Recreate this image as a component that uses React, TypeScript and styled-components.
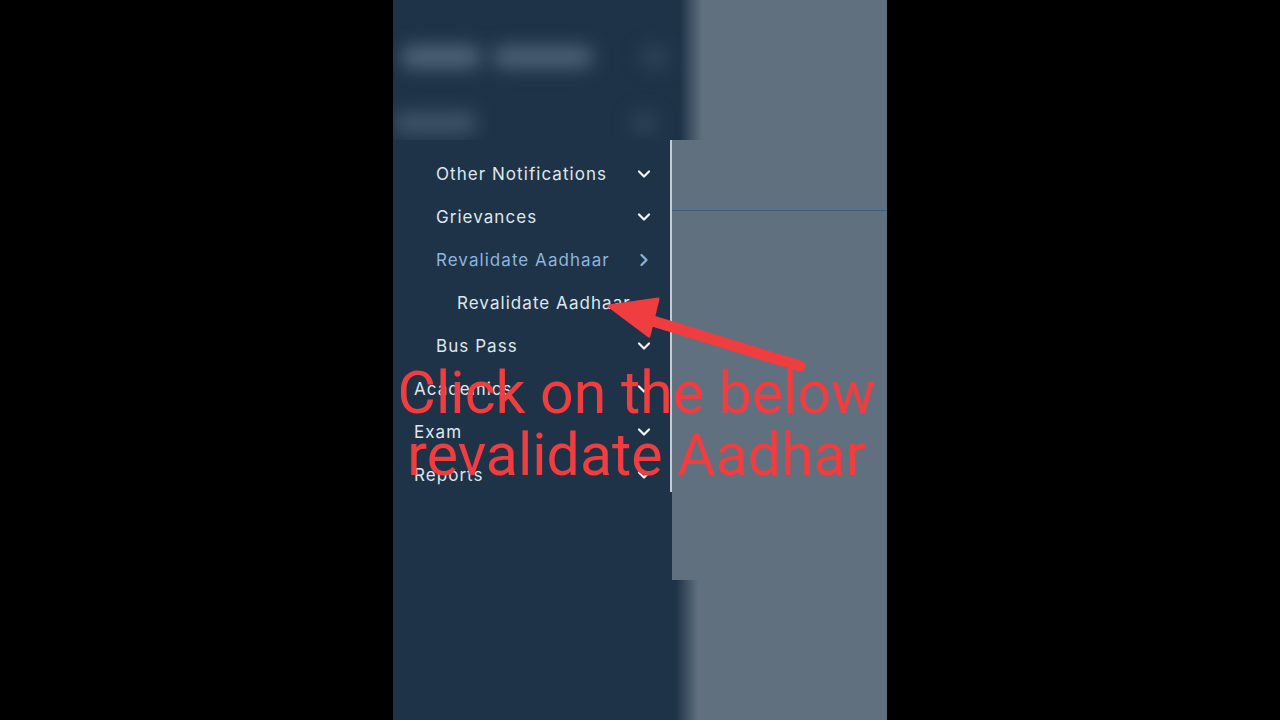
import * as React from 'react'
import styled, { createGlobalStyle } from 'styled-components'
import { ChevronDown, ChevronRight } from 'lucide-react'

const colors = {
  navy: '#1f3348',
  slate: '#60707e',
  text: '#dfe7ee',
  active: '#8db5dc',
  red: '#ef3d40',
  rule: '#3e5d7c',
  divider: '#c3ccd4',
}

const GlobalStyle = createGlobalStyle`
  html, body {
    margin: 0;
    background: #000;
  }
`

const Stage = styled.div`
  display: flex;
  justify-content: center;
  width: 1280px;
  height: 720px;
  background: #000;
`

const Phone = styled.div`
  position: relative;
  display: flex;
  flex-direction: column;
  width: 494px;
  height: 720px;
  overflow: hidden;
  background: ${colors.slate};
`

const BlurBand = styled.div<{ $edge: number }>`
  height: 140px;
  flex: none;
  overflow: hidden;
  background: linear-gradient(
    90deg,
    ${colors.navy} 0,
    ${colors.navy} ${(p) => p.$edge}px,
    ${colors.slate} ${(p) => p.$edge + 22}px
  );
`

const BlurHeader = styled.div`
  display: flex;
  flex-direction: column;
  gap: 40px;
  padding: 44px 0 0 0;
  width: 280px;
  filter: blur(9px);
`

const BlurRow = styled.div`
  display: flex;
  align-items: center;
  height: 26px;
`

const Blob = styled.div<{ $w: number; $shade: string; $ml?: number }>`
  width: ${(p) => p.$w}px;
  height: 22px;
  margin-left: ${(p) => p.$ml ?? 0}px;
  border-radius: 10px;
  background: ${(p) => p.$shade};
`

const Middle = styled.div`
  display: flex;
  height: 440px;
  flex: none;
`

const Sidebar = styled.nav`
  display: flex;
  flex-direction: column;
  width: 279px;
  background: ${colors.navy};
`

const MenuPane = styled.ul`
  list-style: none;
  margin: 0;
  padding: 12px 0 0 0;
  height: 340px;
  overflow: hidden;
  border-right: 2px solid ${colors.divider};
`

const Item = styled.li<{ $level: number; $active?: boolean }>`
  display: flex;
  align-items: center;
  justify-content: space-between;
  height: 43px;
  padding: 0 16px 0 ${(p) => [21, 43, 64][p.$level]}px;
  font-family: Inter, 'Noto Sans', sans-serif;
  font-size: 17px;
  letter-spacing: 1.05px;
  color: ${(p) => (p.$active ? colors.active : colors.text)};

  svg {
    flex: none;
    color: ${(p) => (p.$active ? colors.active : '#f2f5f8')};
  }
`

const Content = styled.div`
  flex: 1;
  padding-top: 70px;
`

const Rule = styled.div`
  height: 1px;
  background: ${colors.rule};
`

const Caption = styled.div`
  position: absolute;
  top: 362px;
  left: 0;
  right: 7px;
  text-align: center;
  font-family: Roboto, 'Liberation Sans', sans-serif;
  font-size: 59px;
  line-height: 62px;
  color: ${colors.red};
  pointer-events: none;
`

const Arrow = styled.svg`
  position: absolute;
  top: 0;
  left: 0;
  pointer-events: none;
`

type MenuEntry = {
  label: string
  level: number
  icon?: 'down' | 'right'
  active?: boolean
}

const menu: MenuEntry[] = [
  { label: 'Other Notifications', level: 1, icon: 'down' },
  { label: 'Grievances', level: 1, icon: 'down' },
  { label: 'Revalidate Aadhaar', level: 1, icon: 'right', active: true },
  { label: 'Revalidate Aadhaar', level: 2 },
  { label: 'Bus Pass', level: 1, icon: 'down' },
  { label: 'Academics', level: 0, icon: 'down' },
  { label: 'Exam', level: 0, icon: 'down' },
  { label: 'Reports', level: 0, icon: 'down' },
]

const App: React.FC = () => (
  <>
    <GlobalStyle />
    <Stage>
      <Phone>
        <BlurBand $edge={287}>
          <BlurHeader>
            <BlurRow>
              <Blob $w={80} $ml={8} $shade="#506579" />
              <Blob $w={100} $ml={12} $shade="#4c6175" />
              <Blob $w={26} $ml={48} $shade="#2f4358" />
            </BlurRow>
            <BlurRow>
              <Blob $w={84} $shade="#3f5468" />
              <Blob $w={26} $ml={154} $shade="#2f4358" />
            </BlurRow>
          </BlurHeader>
        </BlurBand>
        <Middle>
          <Sidebar>
            <MenuPane>
              {menu.map((m, i) => (
                <Item key={i} $level={m.level} $active={m.active}>
                  <span>{m.label}</span>
                  {m.icon === 'down' && <ChevronDown size={20} strokeWidth={2.6} />}
                  {m.icon === 'right' && <ChevronRight size={20} strokeWidth={2.6} />}
                </Item>
              ))}
            </MenuPane>
          </Sidebar>
          <Content>
            <Rule />
          </Content>
        </Middle>
        <BlurBand $edge={283} />
        <Caption>
          Click on the below
          <br />
          revalidate Aadhar
        </Caption>
        <Arrow width="494" height="720" viewBox="0 0 494 720">
          <line x1="407" y1="366" x2="250" y2="318" stroke={colors.red} strokeWidth="11" strokeLinecap="round" />
          <polygon points="216,306 265,299 256,336" fill={colors.red} stroke={colors.red} strokeWidth="3" strokeLinejoin="round" />
        </Arrow>
      </Phone>
    </Stage>
  </>
)

export default App
